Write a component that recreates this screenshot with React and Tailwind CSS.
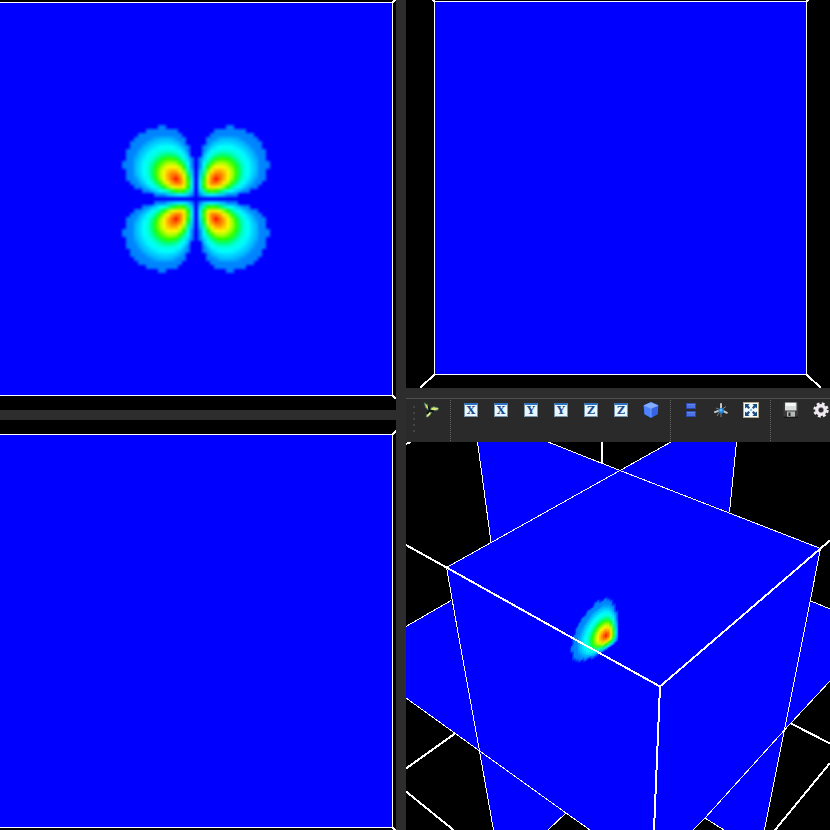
import React from "react";

// Normalised density of a d-type orbital lobe; its maximum sits at (20, 20).
const PEAK = 20;
const CELL = 4;
const EXTENT = 76;
const CUTOFF = 0.158;

function orbital(x, y) {
  if (x <= 0 || y <= 0) return 0;
  const s = Math.hypot(x, y) / (PEAK * Math.SQRT2);
  const angular = (2 * x * y) / (x * x + y * y);
  return s * s * Math.exp(-2 * (s - 1)) * angular;
}

const STOPS = [
  [0.158, 0, 128, 255],
  [0.24, 0, 134, 255],
  [0.275, 0, 180, 255],
  [0.33, 0, 210, 255],
  [0.4, 0, 255, 255],
  [0.49, 0, 255, 215],
  [0.57, 0, 255, 110],
  [0.64, 30, 255, 0],
  [0.74, 165, 255, 0],
  [0.83, 255, 250, 0],
  [0.92, 255, 165, 0],
  [0.97, 255, 110, 0],
  [1, 255, 20, 0],
];

function colour(level) {
  if (level < CUTOFF) return [0, 0, 255];
  let k = 0;
  while (k < STOPS.length - 2 && STOPS[k + 1][0] < level) k++;
  const a = STOPS[k];
  const b = STOPS[k + 1];
  const f = Math.min(1, Math.max(0, (level - a[0]) / (b[0] - a[0])));
  return [1, 2, 3].map((i) => a[i] + (b[i] - a[i]) * f);
}

// Colours are looked up on a coarse grid and blended between its nodes.
const COUNT = EXTENT / CELL + 2;
const NODES = Array.from({ length: COUNT }, (_, j) =>
  Array.from({ length: COUNT }, (_, i) => colour(orbital(i * CELL, j * CELL)))
);

function blend(x, y) {
  const i = Math.floor(x / CELL);
  const j = Math.floor(y / CELL);
  const u = x / CELL - i;
  const v = y / CELL - j;
  return [0, 1, 2].map((c) =>
    Math.round(
      NODES[j][i][c] * (1 - u) * (1 - v) +
        NODES[j][i + 1][c] * u * (1 - v) +
        NODES[j + 1][i][c] * (1 - u) * v +
        NODES[j + 1][i + 1][c] * u * v
    )
  );
}

const SAMPLES = [];
for (let y = 0; y < EXTENT; y++) {
  for (let x = 0; x < EXTENT; x++) {
    const [r, g, b] = blend(x + 0.5, y + 0.5);
    if (r > 0 || g > 3) SAMPLES.push({ x, y, fill: `rgb(${r},${g},${b})` });
  }
}

function LobeShape({ id, size }) {
  return (
    <defs>
      <g id={id} shapeRendering="crispEdges">
        {SAMPLES.map((s) => (
          <rect key={`${s.x}-${s.y}`} x={s.x} y={s.y} width={size} height={size} fill={s.fill} />
        ))}
      </g>
    </defs>
  );
}

function View({ label, viewBox, children }) {
  return (
    <svg
      role="img"
      aria-label={label}
      viewBox={viewBox}
      preserveAspectRatio="xMidYMid slice"
      className="block h-full w-full"
    >
      {children}
    </svg>
  );
}

function XYView() {
  return (
    <View label="XY slice" viewBox="0 0 396 410">
      <LobeShape id="lobe-flat" size={1} />
      <g shapeRendering="crispEdges" stroke="#fff">
        <rect x="-0.5" y="2.5" width="393" height="393" fill="#00f" />
        <path d="M392.5 2.5L396 -1M392.5 395.5L396 399" strokeWidth="2" />
      </g>
      <use href="#lobe-flat" transform="translate(196 199)" />
      <use href="#lobe-flat" transform="translate(196 199) scale(-1 1)" />
      <use href="#lobe-flat" transform="translate(196 199) scale(1 -1)" />
      <use href="#lobe-flat" transform="translate(196 199) scale(-1 -1)" />
    </View>
  );
}

function XZView() {
  return (
    <View label="XZ slice" viewBox="0 0 396 410">
      <g shapeRendering="crispEdges" stroke="#fff">
        <rect x="-0.5" y="14.5" width="393" height="393" fill="#00f" />
        <path d="M392.5 14.5L396 11M392.5 407.5L396 411" strokeWidth="2" />
      </g>
    </View>
  );
}

function YZView() {
  return (
    <View label="YZ slice" viewBox="0 0 424 388">
      <g shapeRendering="crispEdges" stroke="#fff">
        <rect x="28.5" y="1.5" width="372" height="373" fill="#00f" />
        <path d="M28.5 1.5L26 -1M400.5 1.5L403 -1" strokeWidth="2" />
        <path d="M28.5 374.5L14 388M400.5 374.5L415 388" strokeWidth="2" />
      </g>
    </View>
  );
}

function SceneView() {
  return (
    <View label="3D scene" viewBox="406 442 424 388">
      <LobeShape id="lobe-tilted" size={1.5} />
      <g fill="#00f" shapeRendering="crispEdges">
        <path d="M477 442H548L620 470L491 542Z" />
        <path d="M671 442H736L729 512L620 470Z" />
        <path d="M406 626L451 600L480 751L406 698Z" />
        <path d="M811 601L830 609V681L784 731Z" />
        <path d="M446 567L620 470L821 548L764 830H724L705 818L693 830H590L566 813L548 830H493Z" />
      </g>
      <use href="#lobe-tilted" transform="matrix(-0.655 0.46 0 -0.75 619 641.5)" />
      <g fill="none" stroke="#fff" shapeRendering="crispEdges">
        <path d="M446.5 567.5L620 470.5L671 442M820.5 548.5L620 470.5L548 442" />
        <path d="M477.5 442L491 542M736.5 442L729.5 512" />
        <path d="M446.5 567.5L457.5 630L479.5 751L493.5 830" />
        <path d="M820.5 548.5L804.5 630L784.5 730L764.5 830" />
        <path d="M406 626.5L451 600.5M811 601L830 609" />
        <path d="M406 698L479 750.5L566 813L590 830M830 681L784 730.5L705 818L693 830" />
        <path d="M566 813L548 830M705 818L724 830" />
        <path
          strokeWidth="2"
          d="M406 545L446.5 567.5L576 640L660 686.5L820.5 548.5L830 540.5M660 686.5L654 830M601.5 442L602.5 463M406 768.5L455 733.5M406 791.5L453.5 830M791 723.5L830 743.5M830 763L775 830M406 444L411 442"
        />
      </g>
    </View>
  );
}

function Icon({ children }) {
  return (
    <svg viewBox="0 0 16 16" className="size-4 overflow-visible" aria-hidden="true">
      {children}
    </svg>
  );
}

function AxisIcon({ letter }) {
  return (
    <span className="flex size-[14px] items-center justify-center border border-t-2 border-[#7894a8] border-t-[#2b6fbd] bg-[#e8f6fe] font-['DejaVu_Serif','Liberation_Serif',serif] text-[11px] leading-none font-bold text-[#204a86]">
      {letter}
    </span>
  );
}

function PropellerIcon() {
  return (
    <Icon>
      <path d="M5.6 8.2L2.6 5.4L1.2 0.8L3.6 2.2L6 4.6Z" fill="#cfdc74" stroke="#41705a" strokeWidth="0.9" />
      <path d="M7.4 7.8L8.4 5.6L10.8 4.8L14.6 5.6L15.8 6.8L14.2 8.2L10.6 8.8Z" fill="#dce675" stroke="#41705a" strokeWidth="0.9" />
      <path d="M6.2 10L8.4 10.4L7.2 12.8L4.6 15L3.2 14.8L4 12Z" fill="#e6ed88" stroke="#5d8560" strokeWidth="0.7" />
      <path d="M5.4 3.6L6.6 8.6L11 9.4M6.6 8.6L4 12" stroke="#0c120c" strokeWidth="1.6" fill="none" />
    </Icon>
  );
}

function CubeIcon() {
  return (
    <Icon>
      <path d="M8 0L15.4 3.2L14.6 12.2L8 16L1.3 12.2L0.5 3.2Z" fill="#3b6ff0" />
      <path d="M8 0.3L15 3.3L8 6.3L1 3.3Z" fill="#82adff" />
      <path d="M1 3.8L7.6 6.6V15.3L1.8 12Z" fill="#4f83fb" />
      <path d="M8.4 6.6L15 3.8L14.2 12L8.4 15.3Z" fill="#3563e6" />
      <path d="M1 3.5L8 6.4L15 3.5M8 6.4V15.5" fill="none" stroke="#9bbcff" strokeWidth="0.6" />
    </Icon>
  );
}

function StackIcon() {
  return (
    <Icon>
      <g stroke="#2a48b0">
        <rect x="3.5" y="1.5" width="9" height="5" fill="#4a72e4" />
        <rect x="3.5" y="9.5" width="9" height="5" fill="#4a72e4" />
      </g>
      <path d="M4 2.4H12M4 10.4H12" stroke="#6f91ee" strokeWidth="0.8" />
    </Icon>
  );
}

function AxesIcon() {
  return (
    <Icon>
      <g stroke="#c3c7c6" strokeWidth="2">
        <path d="M8 8V1.2M8 8L1.2 10.4M8 8L14.5 11.2" />
        <path d="M8 8L13 4.5M8 8V15M8 8L3 6M8 8L4 14" stroke="#7d8584" strokeWidth="1" />
      </g>
      <circle cx="8.2" cy="8.8" r="2.7" fill="#1b80dc" />
      <circle cx="8" cy="8.2" r="1.4" fill="#5cbcff" />
    </Icon>
  );
}

function FitIcon() {
  return (
    <Icon>
      <rect x="0.5" y="0.5" width="15" height="15" fill="#f2fbff" stroke="#b3a883" />
      <g fill="#1d4c80">
        <path d="M2 2H6.5L5.2 3.5L7 5.6L5.6 7L3.5 5.2L2 6.5Z" />
        <path d="M14 2H9.5L10.8 3.5L9 5.6L10.4 7L12.5 5.2L14 6.5Z" />
        <path d="M2 14H6.5L5.2 12.5L7 10.4L5.6 9L3.5 10.8L2 9.5Z" />
        <path d="M14 14H9.5L10.8 12.5L9 10.4L10.4 9L12.5 10.8L14 9.5Z" />
      </g>
      <circle cx="8" cy="8" r="1.2" fill="#8dc4e8" />
    </Icon>
  );
}

function SaveIcon() {
  return (
    <Icon>
      <rect x="0.5" y="0.5" width="14.5" height="14.5" rx="1" fill="#3b3b3b" />
      <rect x="2" y="0.5" width="11.5" height="8" fill="#d9dcdc" />
      <rect x="3" y="1" width="9.5" height="3" fill="#f7f7f7" />
      <rect x="4" y="9.5" width="8" height="5.5" fill="#b7b9b9" />
      <rect x="5.5" y="10.5" width="2" height="3.5" fill="#292929" />
      <path d="M1 15.2H15" stroke="#111" />
    </Icon>
  );
}

function GearIcon() {
  return (
    <Icon>
      <circle cx="8" cy="8" r="6.4" fill="none" stroke="#efe9f0" strokeWidth="2.6" strokeDasharray="2.8 2.226" />
      <circle cx="8" cy="8" r="4.2" fill="none" stroke="#efe9f0" strokeWidth="3.4" />
      <circle cx="8" cy="8" r="2.6" fill="none" stroke="#8d878f" strokeWidth="0.5" />
    </Icon>
  );
}

function ToolButton({ label, children }) {
  return (
    <button
      type="button"
      aria-label={label}
      className="flex h-[22px] w-[30px] shrink-0 items-center justify-center"
    >
      {children}
    </button>
  );
}

function Separator() {
  return (
    <div className="flex w-[10px] shrink-0 self-stretch py-px pl-1">
      <div className="border-l border-dotted border-[#666]" />
    </div>
  );
}

function Toolbar() {
  return (
    <div className="shrink-0 bg-[#2d2d2d] pt-[10px]">
      <div
        role="toolbar"
        aria-label="View tools"
        className="flex h-11 items-start overflow-hidden border-t border-[#505050] bg-[#2a2a2a]"
      >
        <div className="flex w-[10px] shrink-0 flex-col items-end gap-1 pt-[7px] pr-px">
          <i className="size-[2px] bg-[#444]" />
          <i className="size-[2px] bg-[#444]" />
          <i className="size-[2px] bg-[#444]" />
          <i className="size-[2px] bg-[#444]" />
          <i className="size-[2px] bg-[#444]" />
        </div>
        <ToolButton label="Pipeline"><PropellerIcon /></ToolButton>
        <Separator />
        <ToolButton label="View along -X"><AxisIcon letter="X" /></ToolButton>
        <ToolButton label="View along +X"><AxisIcon letter="X" /></ToolButton>
        <ToolButton label="View along -Y"><AxisIcon letter="Y" /></ToolButton>
        <ToolButton label="View along +Y"><AxisIcon letter="Y" /></ToolButton>
        <ToolButton label="View along -Z"><AxisIcon letter="Z" /></ToolButton>
        <ToolButton label="View along +Z"><AxisIcon letter="Z" /></ToolButton>
        <ToolButton label="Isometric view"><CubeIcon /></ToolButton>
        <Separator />
        <ToolButton label="Parallel projection"><StackIcon /></ToolButton>
        <ToolButton label="Show axes"><AxesIcon /></ToolButton>
        <ToolButton label="Full screen"><FitIcon /></ToolButton>
        <Separator />
        <ToolButton label="Save scene"><SaveIcon /></ToolButton>
        <ToolButton label="Configure scene"><GearIcon /></ToolButton>
      </div>
    </div>
  );
}

export default function App() {
  return (
    <main className="flex h-screen gap-[10px] overflow-hidden bg-[#2d2d2d]">
      <div className="flex min-w-0 flex-[396] flex-col gap-[10px]">
        <section className="min-h-0 flex-1 bg-black"><XYView /></section>
        <section className="min-h-0 flex-1 bg-black"><XZView /></section>
      </div>
      <div className="flex min-w-0 flex-[424] flex-col">
        <section className="min-h-0 flex-1 bg-black"><YZView /></section>
        <Toolbar />
        <section className="min-h-0 flex-1 bg-black"><SceneView /></section>
      </div>
    </main>
  );
}
